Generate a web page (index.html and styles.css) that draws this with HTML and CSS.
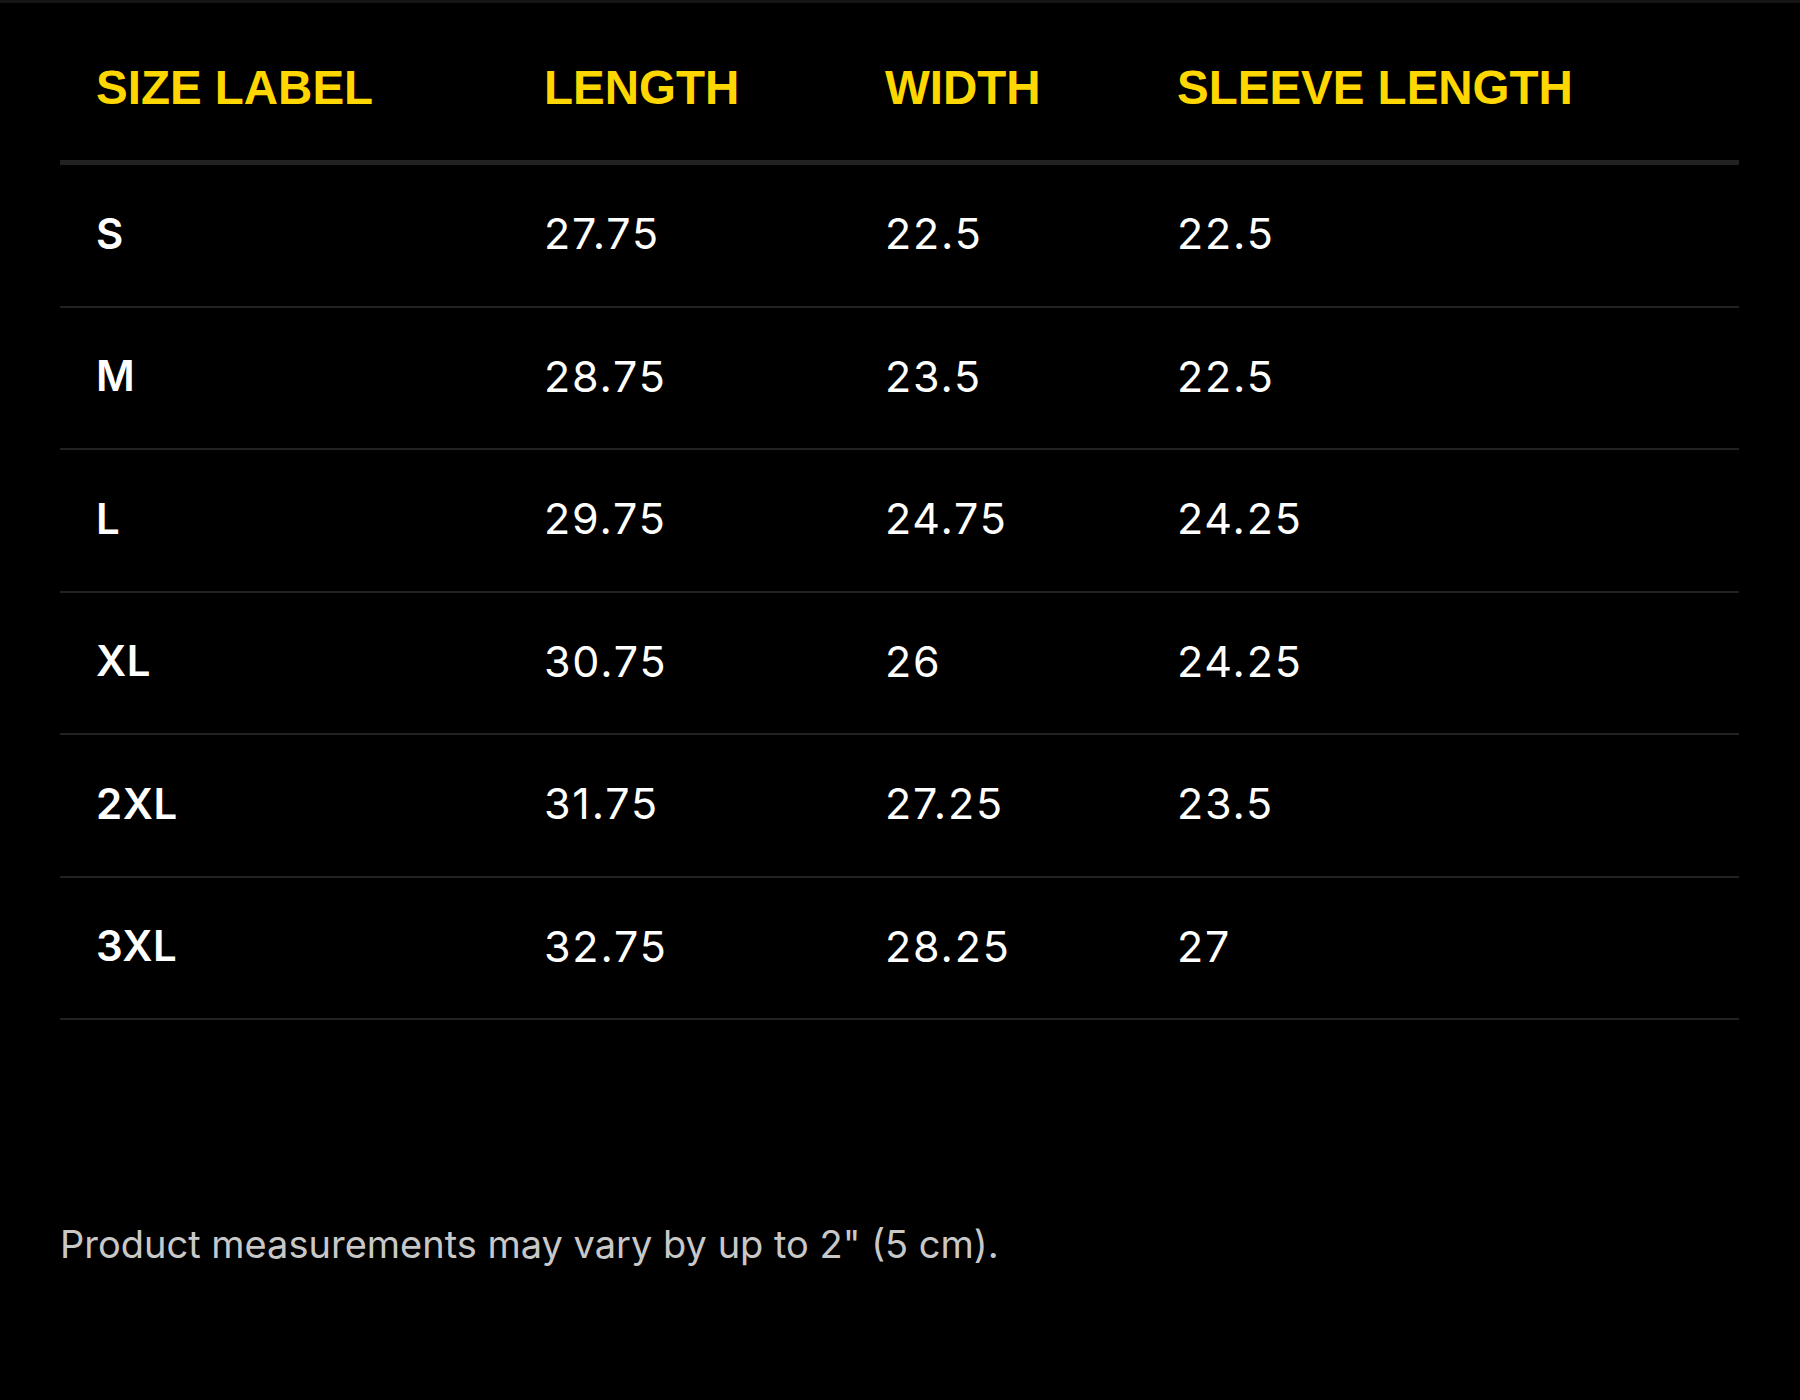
FILE: index.html
```html
<!DOCTYPE html>
<html lang="en">
<head>
<meta charset="utf-8">
<title>Size chart</title>
<link rel="stylesheet" href="styles.css">
</head>
<body>
<main class="chart">
  <table class="sizes">
    <thead>
      <tr>
        <th class="c1">SIZE LABEL</th>
        <th class="c2">LENGTH</th>
        <th class="c3">WIDTH</th>
        <th class="c4">SLEEVE LENGTH</th>
      </tr>
    </thead>
    <tbody>
      <tr><td class="label">S</td><td>27.75</td><td>22.5</td><td>22.5</td></tr>
      <tr><td class="label">M</td><td>28.75</td><td>23.5</td><td>22.5</td></tr>
      <tr><td class="label">L</td><td>29.75</td><td>24.75</td><td>24.25</td></tr>
      <tr><td class="label">XL</td><td>30.75</td><td>26</td><td>24.25</td></tr>
      <tr><td class="label">2XL</td><td>31.75</td><td>27.25</td><td>23.5</td></tr>
      <tr><td class="label">3XL</td><td>32.75</td><td>28.25</td><td>27</td></tr>
    </tbody>
  </table>
  <p class="note">Product measurements may vary by up to 2" (5 cm).</p>
</main>
</body>
</html>
```

FILE: styles.css
```css
html, body {
  margin: 0;
  padding: 0;
  background: #000;
}

body {
  border-top: 3px solid #161616;
  min-height: 1397px;
}

.chart {
  padding: 0 61px 0 60px;
  font-family: Inter, Lato, "Open Sans", sans-serif;
  color: #fff;
}

.sizes {
  width: 100%;
  border-collapse: collapse;
  table-layout: fixed;
}

.sizes th,
.sizes td {
  text-align: left;
  padding: 0 0 0 36px;
  vertical-align: middle;
}

.c1 { width: 412px; }
.c2 { width: 305px; }
.c3 { width: 256px; }

.sizes th {
  height: 145px;
  padding-top: 12px;
  font-family: "Liberation Sans", Arial, sans-serif;
  font-weight: 700;
  font-size: 47.5px;
  color: #ffd700;
  border-bottom: 5px solid #222;
}

.sizes td {
  height: 136.5px;
  padding-bottom: 4px;
  font-size: 43px;
  font-weight: 400;
  letter-spacing: 1.8px;
  border-bottom: 2px solid #222;
}

.sizes td.label {
  font-weight: 600;
  font-size: 42px;
  letter-spacing: 0.5px;
}

.note {
  margin: 202px 0 0 0;
  font-size: 38px;
  color: #c8c8c8;
  line-height: 44px;
}
```
